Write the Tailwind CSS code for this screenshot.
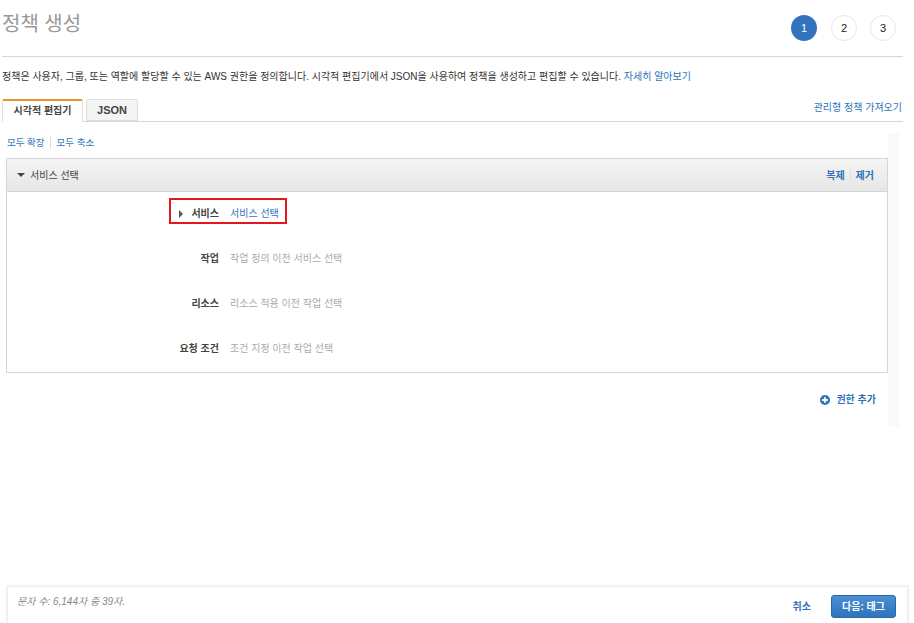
<!DOCTYPE html>
<html lang="ko">
<head>
  <meta charset="UTF-8" />
  <title>정책 생성</title>
  <script src="https://cdn.jsdelivr.net/npm/@tailwindcss/browser@4"></script>
</head>
<body class="bg-white overflow-hidden font-['Liberation_Sans','Noto_Sans_CJK_KR',sans-serif]">
  <div class="h-[623px] w-[914px] flex flex-col pl-[2px] text-[10px] leading-[14px] text-[#333]">

    <!-- Title and steps -->
    <div class="w-[901px] h-[57px] border-b border-[#d5d5d5] flex justify-between pt-[15px] pr-[7px]">
      <h1 class="text-[20px] leading-[14px] mt-[2px] text-[#999] font-normal">정책 생성</h1>
      <div class="flex gap-[13px] text-[11px]">
        <div class="w-[26px] h-[26px] mr-[1px] rounded-full bg-[#3273bd] text-white flex items-center justify-center">1</div>
        <div class="w-[26px] h-[26px] rounded-full border border-[#e6e6e6] text-[#222] flex items-center justify-center">2</div>
        <div class="w-[26px] h-[26px] rounded-full border border-[#e6e6e6] text-[#222] flex items-center justify-center">3</div>
      </div>
    </div>

    <p class="mt-[13px]">정책은 사용자, 그룹, 또는 역할에 할당할 수 있는 AWS 권한을 정의합니다. 시각적 편집기에서 JSON을 사용하여 정책을 생성하고 편집할 수 있습니다. <a class="text-[#2e74b8]">자세히 알아보기</a></p>

    <!-- Tabs -->
    <div class="w-[901px] h-[23px] mt-[15px] border-b border-[#d5d5d5] flex items-end">
      <div class="w-[81px] h-[23px] -mb-px bg-white border-x border-b border-b-white border-x-[#ddd] border-t-2 border-t-[#e8912d] rounded-t-[2px] font-bold text-[#444] flex items-center justify-center">시각적 편집기</div>
      <div class="w-[52px] h-[22px] ml-[3px] bg-[#f4f4f4] border border-[#ddd] rounded-t-[2px] font-bold text-[11px] text-[#444] flex items-center justify-center">JSON</div>
      <a class="ml-auto mb-[6px] mr-[1px] text-[#2e74b8]">관리형 정책 가져오기</a>
    </div>

    <!-- Editor area -->
    <div class="w-[897px] h-[293px] mt-[11px] flex">
      <div class="w-[886px] pl-[4px]">
        <div class="flex items-center pl-px mt-[3px] h-[14px] text-[9.5px] text-[#2e74b8]">
          <a>모두 확장</a>
          <span class="w-px h-[12px] bg-[#ddd] ml-[5px] mr-[6px]"></span>
          <a>모두 축소</a>
        </div>

        <div class="mt-[8px] w-[882px] h-[215px] border border-[#d5d5d5]">
          <div class="h-[33px] border-b border-[#d5d5d5] bg-gradient-to-b from-[#f5f5f5] to-[#e6e6e6] flex items-center pl-[10px] pr-[13px]">
            <span class="w-0 h-0 border-x-[4px] border-x-transparent border-t-[4px] border-t-[#444] mr-[5px]"></span>
            <span class="text-[#444] pt-px">서비스 선택</span>
            <a class="ml-auto pt-px font-bold text-[#2e74b8]">복제</a>
            <span class="w-px h-[12px] bg-[#ddd] mx-[5px]"></span>
            <a class="pt-px font-bold text-[#2e74b8]">제거</a>
          </div>
          <div class="relative pt-[15px] flex flex-col gap-[31px]">
            <div class="absolute left-[162px] top-[6px] w-[118px] h-[26px] border-2 border-[#e3171f]"></div>
            <div class="flex h-[14px] gap-[11px]">
              <div class="w-[212px] flex items-center justify-end font-bold text-[#444]">
                <span class="w-0 h-0 border-y-[4px] border-y-transparent border-l-[4px] border-l-[#555] mr-[8px]"></span>서비스
              </div>
              <a class="text-[#2e74b8]">서비스 선택</a>
            </div>
            <div class="flex h-[14px] gap-[11px]">
              <div class="w-[212px] text-right font-bold text-[#444]">작업</div>
              <span class="text-[#aaa]">작업 정의 이전 서비스 선택</span>
            </div>
            <div class="flex h-[14px] gap-[11px]">
              <div class="w-[212px] text-right font-bold text-[#444]">리소스</div>
              <span class="text-[#aaa]">리소스 적용 이전 작업 선택</span>
            </div>
            <div class="flex h-[14px] gap-[11px]">
              <div class="w-[212px] text-right font-bold text-[#444]">요청 조건</div>
              <span class="text-[#aaa]">조건 지정 이전 작업 선택</span>
            </div>
          </div>
        </div>

        <div class="mt-[20px] w-[870px] flex justify-end items-center font-bold text-[#2e74b8]">
          <svg class="w-[10px] h-[10px] mr-[6px]" viewBox="0 0 10 10">
            <circle cx="5" cy="5" r="5" fill="#2e74b8" />
            <path d="M5 2.2v5.6M2.2 5h5.6" stroke="#fff" stroke-width="1.8" />
          </svg>
          <a>권한 추가</a>
        </div>
      </div>
      <div class="w-[11px] h-full bg-[#f9f9f9]"></div>
    </div>

    <!-- Footer -->
    <div class="mt-auto ml-[5px] w-[901px] h-[37px] bg-white border border-[#eee] border-b-0 shadow-[0_0_3px_rgba(0,0,0,0.12)] flex pl-[9px] pr-[11px]">
      <span class="mt-[8px] italic text-[#888]">문자 수: 6,144자 중 39자.</span>
      <a class="ml-auto mt-[13px] font-bold text-[#2e74b8]">취소</a>
      <button class="ml-[20px] mt-[8px] w-[65px] h-[23px] rounded-[3px] border border-[#2a66a8] bg-gradient-to-b from-[#4a8fd4] to-[#2f73bc] text-white font-bold">다음: 태그</button>
    </div>
  </div>
</body>
</html>
